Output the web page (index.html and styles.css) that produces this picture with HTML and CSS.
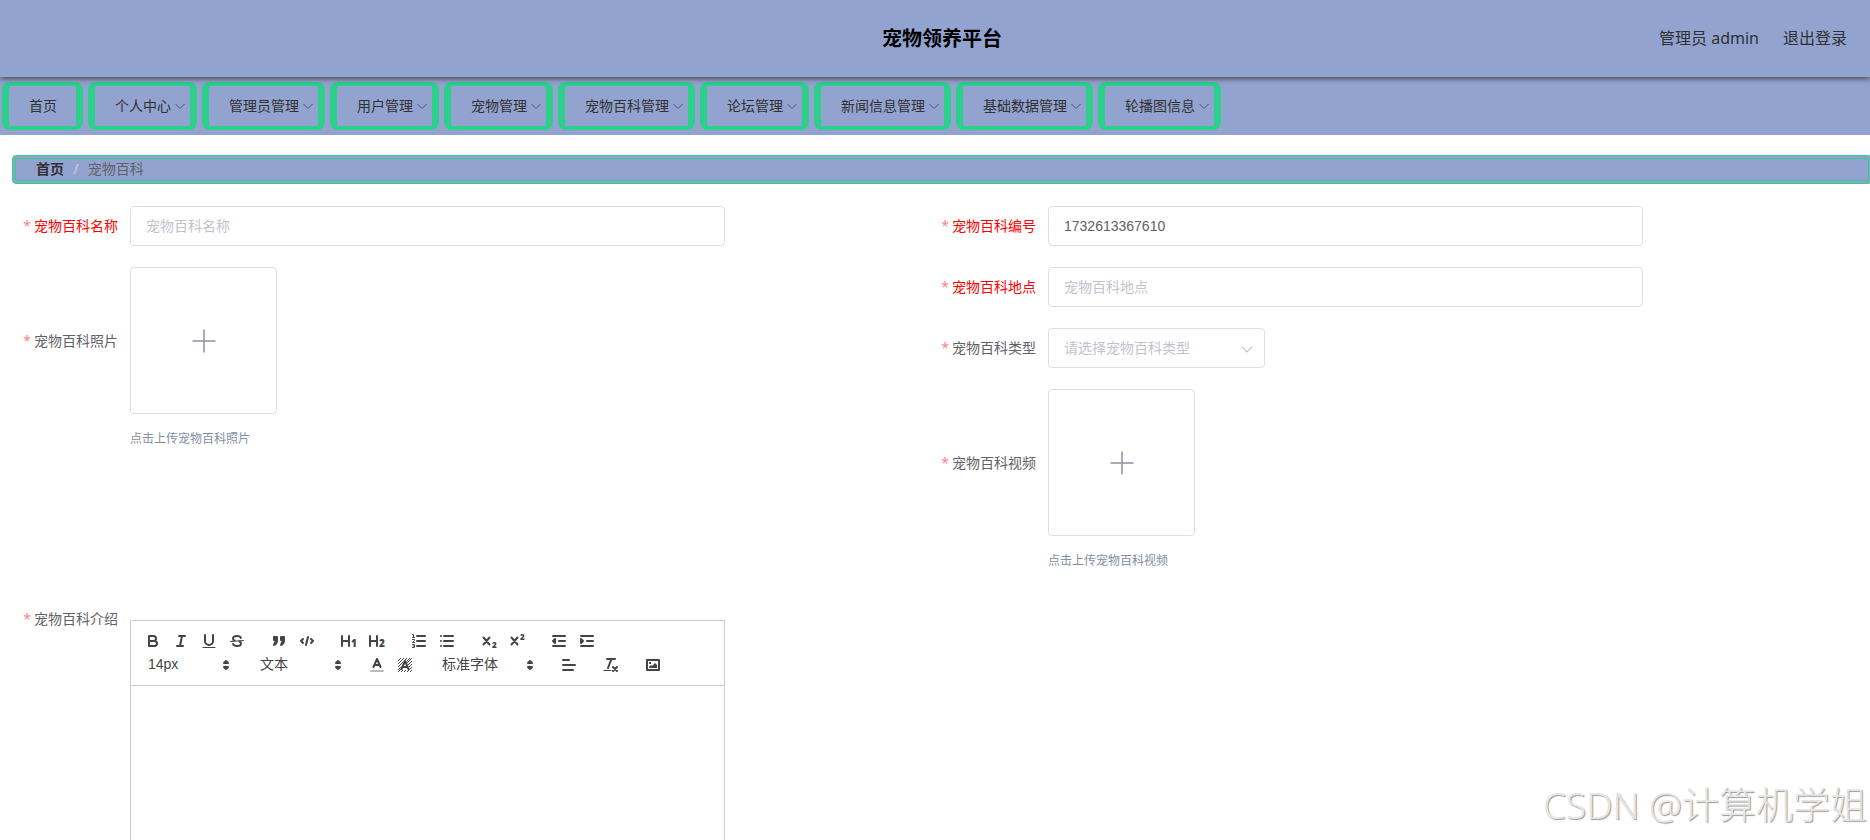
FILE: index.html
```html
<!DOCTYPE html>
<html lang="zh-CN">
<head>
<meta charset="utf-8">
<title>宠物领养平台</title>
<link rel="stylesheet" href="styles.css">
</head>
<body>
<svg class="defs" aria-hidden="true">
  <symbol id="chevron" viewBox="0 0 12 12"><path d="M1.5 4 6 8.5 10.5 4" fill="none" stroke="currentColor"/></symbol>
  <symbol id="plus" viewBox="0 0 24 24"><path d="M12 0.5v23M0.5 12h23" fill="none" stroke="currentColor" stroke-width="1.5"/></symbol>
  <symbol id="updown" viewBox="0 0 18 18"><path d="M7 11 9 13 11 11ZM7 7 9 5 11 7Z" fill="currentColor" stroke="currentColor" stroke-width="2" stroke-linejoin="round"/></symbol>
</svg>
<div class="page">
  <header class="header">
    <h1 class="title">宠物领养平台</h1>
    <div class="user"><span>管理员 admin</span><a href="#">退出登录</a></div>
  </header>
  <nav class="nav">
    <a class="nav-item" href="#">首页</a>
    <a class="nav-item" href="#">个人中心<svg class="nav-arrow"><use href="#chevron"/></svg></a>
    <a class="nav-item" href="#">管理员管理<svg class="nav-arrow"><use href="#chevron"/></svg></a>
    <a class="nav-item" href="#">用户管理<svg class="nav-arrow"><use href="#chevron"/></svg></a>
    <a class="nav-item" href="#">宠物管理<svg class="nav-arrow"><use href="#chevron"/></svg></a>
    <a class="nav-item" href="#">宠物百科管理<svg class="nav-arrow"><use href="#chevron"/></svg></a>
    <a class="nav-item" href="#">论坛管理<svg class="nav-arrow"><use href="#chevron"/></svg></a>
    <a class="nav-item" href="#">新闻信息管理<svg class="nav-arrow"><use href="#chevron"/></svg></a>
    <a class="nav-item" href="#">基础数据管理<svg class="nav-arrow"><use href="#chevron"/></svg></a>
    <a class="nav-item" href="#">轮播图信息<svg class="nav-arrow"><use href="#chevron"/></svg></a>
  </nav>
  <main class="main">
    <div class="crumbs"><a href="#">首页</a><span class="slash">/</span><span>宠物百科</span></div>
    <form class="form">
      <div class="column">
        <div class="row"><label class="label key" for="name">宠物百科名称</label><div class="field"><input class="input" id="name" placeholder="宠物百科名称"></div></div>
        <div class="row"><label class="label tall" for="photo">宠物百科照片</label><div class="field"><button class="upload" id="photo" type="button" aria-label="上传照片"><svg class="plus"><use href="#plus"/></svg></button><p class="tip">点击上传宠物百科照片</p></div></div>
      </div>
      <div class="column">
        <div class="row"><label class="label key" for="code">宠物百科编号</label><div class="field"><input class="input" id="code" value="1732613367610"></div></div>
        <div class="row"><label class="label key" for="place">宠物百科地点</label><div class="field"><input class="input" id="place" placeholder="宠物百科地点"></div></div>
        <div class="row"><label class="label" for="type">宠物百科类型</label><div class="field"><div class="select-box"><select class="input select" id="type"><option>请选择宠物百科类型</option></select><svg class="select-arrow"><use href="#chevron"/></svg></div></div></div>
        <div class="row"><label class="label tall" for="video">宠物百科视频</label><div class="field"><button class="upload" id="video" type="button" aria-label="上传视频"><svg class="plus"><use href="#plus"/></svg></button><p class="tip">点击上传宠物百科视频</p></div></div>
      </div>
      <div class="column">
        <div class="row intro"><label class="label" for="intro">宠物百科介绍</label>
          <div class="field">
            <div class="toolbar">
              <div class="tools">
                <div class="group">
                  <button class="tool" type="button" aria-label="粗体"><svg viewBox="0 0 18 18"><path d="M5 4H9.500A2.500 2.500 0 0 1 9.500 9H5ZM5 9H10.500A2.500 2.500 0 0 1 10.500 14H5Z"/></svg></button>
                  <button class="tool" type="button" aria-label="斜体"><svg viewBox="0 0 18 18"><path d="M7 4h6M5 14h6M8 14 10 4"/></svg></button>
                  <button class="tool" type="button" aria-label="下划线"><svg viewBox="0 0 18 18"><path d="M5 3V9a4 4 0 0 0 8 0V3"/><path class="thin" d="M3 15.500H15"/></svg></button>
                  <button class="tool" type="button" aria-label="删除线"><svg viewBox="0 0 18 18"><path d="M12.900 6C12.500 4.800 10.900 4 9 4 6.700 4 5 5.100 5 6.500 5 7.500 5.500 8.200 6.500 8.500M5.100 12C5.500 13.200 7.100 14 9 14 11.300 14 13 12.900 13 11.500 13 10.500 12.500 9.800 11.500 9.500"/><path class="thin" d="M15.500 8.500 2.500 9.500"/></svg></button>
                </div>
                <div class="group">
                  <button class="tool" type="button" aria-label="引用"><svg viewBox="0 0 18 18"><path class="solid" d="M4 5h3v3H4ZM11 5h3v3H11ZM7 8C7 12 4 13 4 13L6 8ZM14 8C14 12 11 13 11 13L13 8Z"/></svg></button>
                  <button class="tool" type="button" aria-label="代码"><svg viewBox="0 0 18 18"><path d="M5 7 3 9 5 11M13 7 15 9 13 11M10 5 8 13"/></svg></button>
                </div>
                <div class="group">
                  <button class="tool" type="button" aria-label="标题一"><svg viewBox="0 0 18 18"><path d="M2 4V14M9 4V14M2 9H9"/><text x="11" y="15">1</text></svg></button>
                  <button class="tool" type="button" aria-label="标题二"><svg viewBox="0 0 18 18"><path d="M2 4V14M9 4V14M2 9H9"/><text x="11" y="15">2</text></svg></button>
                </div>
                <div class="group">
                  <button class="tool" type="button" aria-label="有序列表"><svg viewBox="0 0 18 18"><path d="M7 4h8M7 9h8M7 14h8"/><path class="thin" d="M2.500 2.500h1v3M2.500 5.500h2M2.500 7.500h2v1l-2 2h2M2.500 12.500h2v3h-2M3 14h1.500"/></svg></button>
                  <button class="tool" type="button" aria-label="无序列表"><svg viewBox="0 0 18 18"><path d="M6 4h9M6 9h9M6 14h9M3 4h0M3 9h0M3 14h0"/></svg></button>
                </div>
                <div class="group">
                  <button class="tool" type="button" aria-label="下标"><svg viewBox="0 0 18 18"><path d="M3.500 5.500 9.500 12.500M9.500 5.500 3.500 12.500"/><text class="script" x="12" y="16">2</text></svg></button>
                  <button class="tool" type="button" aria-label="上标"><svg viewBox="0 0 18 18"><path d="M3.500 5.500 9.500 12.500M9.500 5.500 3.500 12.500"/><text class="script" x="12" y="8">2</text></svg></button>
                </div>
                <div class="group">
                  <button class="tool" type="button" aria-label="减少缩进"><svg viewBox="0 0 18 18"><path d="M3 4h12M3 14h12M9 9h6"/><path class="solid" d="M5 7v4L3 9Z"/></svg></button>
                  <button class="tool" type="button" aria-label="增加缩进"><svg viewBox="0 0 18 18"><path d="M3 4h12M3 14h12M9 9h6"/><path class="solid" d="M3 7v4L5 9Z"/></svg></button>
                </div>
              </div>
              <div class="tools">
                <div class="picker"><select aria-label="字号"><option>14px</option></select><svg><use href="#updown"/></svg></div>
                <div class="picker"><select aria-label="段落"><option>文本</option></select><svg><use href="#updown"/></svg></div>
                <div class="group">
                  <button class="tool" type="button" aria-label="文字颜色"><svg viewBox="0 0 18 18"><path d="M5.500 11 9 3 12.500 11M6.500 9H11.500"/><path class="pale" d="M3 15H15"/></svg></button>
                  <button class="tool" type="button" aria-label="背景颜色"><svg viewBox="0 0 18 18"><path class="hatch" d="M2 5 5 2M2 8 8 2M2 11 11 2M2 14 14 2M2 16 16 2M5 16 16 5M8 16 16 8M11 16 16 11M14 16 16 14"/><path class="halo" d="M6 12.500 9 6 12 12.500Z"/><path d="M5.500 13 9 5 12.500 13M6.500 11H11.500"/></svg></button>
                </div>
                <div class="picker wide"><select aria-label="字体"><option>标准字体</option></select><svg><use href="#updown"/></svg></div>
                <div class="group"><button class="tool" type="button" aria-label="对齐"><svg viewBox="0 0 18 18"><path d="M3 9H15M3 14H13M3 4H9"/></svg></button></div>
                <div class="group"><button class="tool" type="button" aria-label="清除格式"><svg viewBox="0 0 18 18"><path d="M5 3H13M6 12 9.400 3M11 11 15 15M15 11 11 15"/><path class="thin" d="M2 14.500H9"/></svg></button></div>
                <div class="group"><button class="tool" type="button" aria-label="图片"><svg viewBox="0 0 18 18"><path d="M3 4H15V14H3Z"/><path class="fill" d="M5 12V11L7 9 8 10 11 7 13 9V12ZM5 6h2v2H5Z"/></svg></button></div>
              </div>
            </div>
            <textarea class="editor" id="intro"></textarea>
          </div>
        </div>
      </div>
    </form>
  </main>
  <div class="watermark">CSDN @计算机学姐</div>
</div>
</body>
</html>
```
FILE: styles.css
```css
* { box-sizing: border-box; }

body {
  margin: 0;
  color: #303133;
  background: #fff;
  font: 14px/20px "Noto Sans", "Noto Sans CJK SC", sans-serif;
}

a { color: inherit; text-decoration: none; }
input, select, textarea, button { font: inherit; color: inherit; }

.defs { display: none; }
.page { position: relative; height: 100vh; overflow: hidden; }

.header {
  position: relative;
  display: grid;
  grid-template-columns: 1fr auto 1fr;
  align-items: center;
  height: 77px;
  padding-left: 14px;
  background: #93a3cf;
  box-shadow: 0 1px 6px #333;
}
.title {
  grid-column: 2;
  margin: 0;
  color: #000;
  font-size: 20px;
  line-height: 28px;
}
.user {
  display: flex;
  justify-content: flex-end;
  gap: 24px;
  padding: 0 23px 2px 0;
  font-size: 16px;
}

.nav {
  display: flex;
  gap: 5px;
  padding: 5px 2px;
  background: #93a3cf;
}
.nav-item {
  display: flex;
  align-items: center;
  height: 48px;
  padding: 0 19px 0 20px;
  border: solid #2cd08a;
  border-width: 4px 7px;
  border-radius: 8px;
  white-space: nowrap;
}
.nav-item:has(svg) { padding-right: 4px; }
.nav-arrow { width: 12px; height: 12px; margin-left: 3px; color: #50566b; }

.main { padding: 20px 0 0 12px; }

.crumbs {
  display: flex;
  align-items: center;
  gap: 9px;
  height: 29px;
  margin-right: -2px;
  padding: 0 0 2px 20px;
  border: 4px double #2cd08a;
  border-radius: 4px;
  background: #93a3cf;
  color: #606266;
}
.crumbs a { color: #303133; font-weight: 700; }
.slash { color: #c0c4cc; font-weight: 700; }

.form {
  display: grid;
  grid-template-columns: 1fr 1fr;
  row-gap: 49px;
  padding: 22px 22px 0 0;
  color: #606266;
}
.column { display: flex; flex-direction: column; gap: 21px; }
.row { display: flex; align-items: flex-start; }
.label {
  width: 118px;
  padding-right: 12px;
  line-height: 40px;
  text-align: right;
  white-space: nowrap;
}
.label::before { content: "*"; margin-right: 3px; color: #f78989; }
.key { color: #f00; }
.tall { line-height: 147px; }
.field { flex: 1; padding-right: 205px; }

.input {
  display: block;
  width: 100%;
  height: 40px;
  padding: 0 15px;
  border: 1px solid #dcdfe6;
  border-radius: 4px;
  background: #fff;
  font-family: "Liberation Sans", "Noto Sans CJK SC", sans-serif;
}
.input::placeholder { color: #c0c4cc; }
.select-box { position: relative; width: 217px; }
.select { appearance: none; color: #c0c4cc; }
.select-arrow {
  position: absolute;
  top: 14px;
  right: 11px;
  width: 14px;
  height: 14px;
  color: #c0c4cc;
  pointer-events: none;
}

.upload {
  display: flex;
  align-items: center;
  justify-content: center;
  width: 147px;
  height: 147px;
  border: 1px solid #dcdfe6;
  border-radius: 4px;
  background: #fff;
}
.plus { width: 24px; height: 24px; color: #8c939d; }
.tip {
  margin: 15px 0 0;
  color: #838fa1;
  font-size: 12px;
}

.intro .label { line-height: 38px; margin-top: -20px; }
.toolbar { padding: 8px; border: 1px solid #ccc; }
.tools { display: flex; gap: 14px; }
.group { display: flex; }
.tool {
  width: 28px;
  height: 24px;
  padding: 3px 5px;
  border: 0;
  background: none;
  color: #444;
}
.tool svg { display: block; width: 18px; height: 18px; }
.tool path {
  fill: none;
  stroke: #444;
  stroke-width: 2;
  stroke-linecap: round;
  stroke-linejoin: round;
}
.tool .thin { stroke-width: 1; }
.tool .solid { fill: #444; }
.tool .fill { fill: #444; stroke: none; }
.tool .pale { stroke: #bbb; }
.tool .hatch { stroke-width: 1; stroke-linecap: butt; }
.tool .halo { fill: #fff; stroke: #fff; stroke-width: 3; }
.tool text { fill: #444; font: 900 10px "Noto Sans", sans-serif; }
.tool .script { font-size: 8px; }

.picker { position: relative; width: 98px; height: 24px; color: #444; }
.picker.wide { width: 108px; }
.picker select {
  width: 100%;
  height: 24px;
  padding: 0 0 2px 9px;
  border: 0;
  background: none;
  appearance: none;
  font-family: "Liberation Sans", "Noto Sans CJK SC", sans-serif;
}
.picker svg {
  position: absolute;
  top: 3px;
  right: 2px;
  width: 18px;
  height: 18px;
  pointer-events: none;
}
.editor {
  display: block;
  width: 100%;
  height: 300px;
  padding: 12px 15px;
  border: 1px solid #ccc;
  border-top: 0;
  resize: none;
}

.watermark {
  position: absolute;
  right: 3px;
  bottom: 9px;
  color: #e6e6e6;
  font-size: 37px;
  font-weight: 300;
  line-height: 52px;
  text-shadow: 1px 1px 1px #999;
  white-space: nowrap;
}
```
